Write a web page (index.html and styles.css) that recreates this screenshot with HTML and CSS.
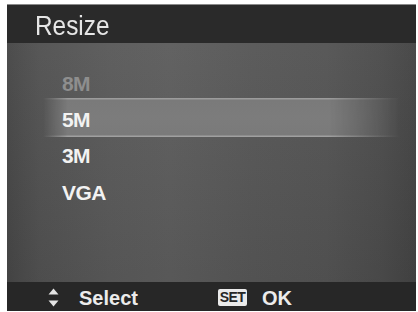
FILE: index.html
```html
<!DOCTYPE html>
<html>
<head>
<meta charset="utf-8">
<link rel="stylesheet" href="styles.css">
</head>
<body>
<div class="screen">
  <div class="header"><span class="title">Resize</span></div>
  <div class="content">
    <ul class="menu">
      <li class="item disabled">8M</li>
      <li class="item selected">5M</li>
      <li class="item">3M</li>
      <li class="item">VGA</li>
    </ul>
  </div>
  <div class="footer">
    <div class="hint">
      <svg class="updown" width="11" height="19" viewBox="0 0 11 19"><path d="M5.5 0.5 L10.5 6.5 L0.5 6.5 Z" fill="#e4e4e4"/><path d="M0.5 12.5 L10.5 12.5 L5.5 18.5 Z" fill="#e4e4e4"/></svg>
      <span class="label">Select</span>
    </div>
    <div class="hint">
      <span class="key">SET</span>
      <span class="label ok">OK</span>
    </div>
  </div>
</div>
</body>
</html>
```
FILE: styles.css
```css
html, body {
  margin: 0;
  padding: 0;
  background: #ffffff;
}
.screen {
  margin: 4px 0 0 7px;
  width: 409px;
  height: 307px;
  display: flex;
  flex-direction: column;
  font-family: "Liberation Sans", Arial, sans-serif;
  color: #ececec;
  overflow: hidden;
}
.header {
  height: 39px;
  box-sizing: border-box;
  padding: 7px 0 0 28px;
  background: #2a2a2a;
  border-top: 1px solid #8a8a8a;
}
.title {
  display: inline-block;
  font-size: 28px;
  line-height: 27px;
  transform: scaleX(0.87);
  transform-origin: left center;
  color: #e6e6e6;
}
.content {
  flex: 1;
  background:
    linear-gradient(to bottom, rgba(255,255,255,0.03), rgba(0,0,0,0.06)),
    linear-gradient(to right, #474747 0%, #525252 8%, #5a5a5a 25%, #5d5d5d 40%, #575757 60%, #545454 78%, #4c4c4c 92%, #444444 100%);
}
.menu {
  list-style: none;
  margin: 0;
  padding: 22px 0 0 0;
}
.item {
  position: relative;
  margin: 0 16px 0 36px;
  padding-left: 19px;
  height: 37px;
  line-height: 37px;
  font-size: 21px;
  font-weight: bold;
  letter-spacing: -0.6px;
  color: #f2f2f2;
}
.item.disabled {
  color: #8e8e8e;
}
.item.selected {
  height: 35px;
  line-height: 35px;
  padding-top: 4px;
  margin-top: -4px;
  isolation: isolate;
}
.item.selected::before {
  content: "";
  position: absolute;
  inset: 0;
  z-index: -1;
  background: linear-gradient(to bottom, #9c9c9c 0, #9c9c9c 1px, #7a7a7a 2px, #7c7c7c 50%, #7a7a7a calc(100% - 2px), #a0a0a0 calc(100% - 1px), #a0a0a0 100%);
  -webkit-mask-image: linear-gradient(to right, transparent 0%, #000 7%, #000 80%, rgba(0,0,0,0.7) 86%, transparent 100%);
  mask-image: linear-gradient(to right, transparent 0%, #000 7%, #000 80%, rgba(0,0,0,0.7) 86%, transparent 100%);
}
.footer {
  height: 29px;
  box-sizing: border-box;
  padding: 3px 0 0 41px;
  background: #272727;
  display: grid;
  grid-template-columns: 170px auto;
  align-items: center;
}
.hint {
  display: flex;
  align-items: center;
}
.updown {
  display: block;
  margin-top: -2px;
}
.label {
  font-size: 20px;
  line-height: 20px;
  font-weight: bold;
  color: #ececec;
  margin-left: 20px;
}
.label.ok {
  margin-left: 15px;
}
.key {
  display: inline-block;
  width: 29px;
  height: 17px;
  box-sizing: border-box;
  background: #ebebeb;
  border-radius: 2px;
  color: #262626;
  font-size: 14px;
  line-height: 17px;
  font-weight: bold;
  text-align: center;
  letter-spacing: -0.5px;
  margin-top: -2px;
}
```
